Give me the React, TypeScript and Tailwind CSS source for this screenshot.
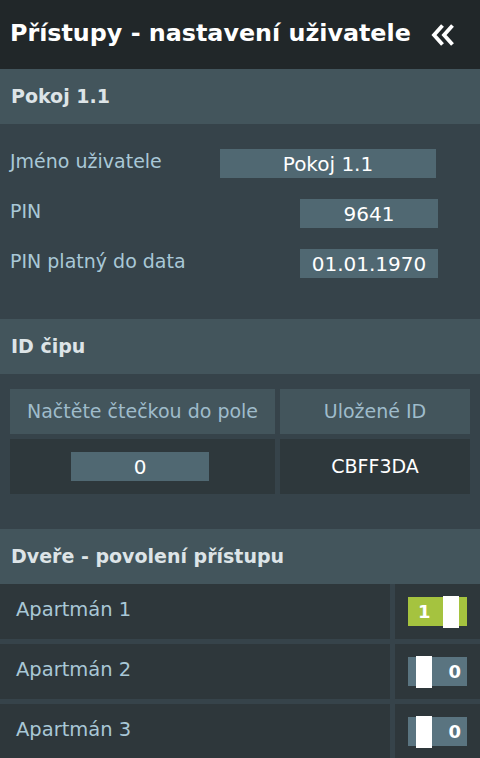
import React from "react"

const font = { fontFamily: '"DejaVu Sans", Verdana, sans-serif' }

function SectionHeader({ title }: { title: string }) {
  return (
    <div className="h-[55px] bg-[#43555c] flex items-center pl-[11px]">
      <span className="text-[19px] font-bold text-[#dde4e7] leading-none">{title}</span>
    </div>
  )
}

function Field({ label, value, wide = false }: { label: string; value: string; wide?: boolean }) {
  return (
    <div className="flex items-center h-[29px]">
      <span className="pl-[10px] pb-[4px] text-[19px] text-[#a9c8d7] leading-none">{label}</span>
      <div
        className={`ml-auto h-[29px] bg-[#506872] text-white text-[20px] leading-none flex items-center justify-center ${
          wide ? "w-[216px] mr-[44px]" : "w-[138px] mr-[42px]"
        }`}
      >
        {value}
      </div>
    </div>
  )
}

function Toggle({ on }: { on: boolean }) {
  return (
    <div className={`relative w-[59px] h-[29px] ${on ? "bg-[#a5c33f]" : "bg-[#5a7480]"}`}>
      <span
        className={`absolute top-0 h-[29px] flex items-center text-white font-bold text-[18px] leading-none ${
          on ? "left-[10px]" : "right-[6px]"
        }`}
      >
        {on ? "1" : "0"}
      </span>
      <div
        className={`absolute -top-[1px] w-[16px] h-[32px] bg-white ${on ? "left-[35px]" : "left-[8px]"}`}
      />
    </div>
  )
}

function DoorRow({ name, on }: { name: string; on: boolean }) {
  return (
    <div className="flex gap-[5px] h-[55px]">
      <div className="flex-1 bg-[#2e373b] flex items-center pl-[16px] pb-[3px]">
        <span className="text-[19.5px] text-[#a9c8d7] leading-none">{name}</span>
      </div>
      <div className="w-[85px] bg-[#2e373b] flex items-center pl-[13px]">
        <Toggle on={on} />
      </div>
    </div>
  )
}

export default function App() {
  return (
    <div className="w-[480px] h-[758px] overflow-hidden bg-[#36434a]" style={font}>
      {/* Header */}
      <div className="h-[69px] bg-[#212729] flex items-center pl-[10px]">
        <h1 className="text-[23.8px] font-bold text-white leading-none pb-[2px] whitespace-nowrap">
          Přístupy - nastavení uživatele
        </h1>
        <svg className="ml-auto mr-[24px]" width="25" height="22" viewBox="0 0 25 22" fill="none">
          <polyline points="11.5,1.5 3,11 11.5,20.5" stroke="white" strokeWidth="3.8" strokeLinejoin="miter" />
          <polyline points="21.5,1.5 13,11 21.5,20.5" stroke="white" strokeWidth="3.8" strokeLinejoin="miter" />
        </svg>
      </div>

      {/* Pokoj */}
      <SectionHeader title="Pokoj 1.1" />
      <div className="h-[195px] pt-[25px] flex flex-col gap-[21px]">
        <Field label="Jméno uživatele" value="Pokoj 1.1" wide />
        <Field label="PIN" value="9641" />
        <Field label="PIN platný do data" value="01.01.1970" />
      </div>

      {/* ID čipu */}
      <SectionHeader title="ID čipu" />
      <div className="h-[155px] pt-[15px] px-[10px]">
        <div className="grid grid-cols-[265px_190px] gap-[5px]">
          <div className="h-[45px] bg-[#43555c] flex items-center justify-center text-[19px] text-[#9fbccb] leading-none">
            Načtěte čtečkou do pole
          </div>
          <div className="h-[45px] bg-[#43555c] flex items-center justify-center text-[19px] text-[#9fbccb] leading-none">
            Uložené ID
          </div>
          <div className="h-[55px] bg-[#2e383c] flex items-center pl-[61px]">
            <div className="w-[138px] h-[29px] bg-[#506872] text-white text-[20px] leading-none flex items-center justify-center">
              0
            </div>
          </div>
          <div className="h-[55px] bg-[#2e383c] flex items-center justify-center text-white text-[19px] leading-none">
            CBFF3DA
          </div>
        </div>
      </div>

      {/* Dveře */}
      <SectionHeader title="Dveře - povolení přístupu" />
      <div className="flex flex-col gap-[5px]">
        <DoorRow name="Apartmán 1" on />
        <DoorRow name="Apartmán 2" on={false} />
        <DoorRow name="Apartmán 3" on={false} />
      </div>
    </div>
  )
}
